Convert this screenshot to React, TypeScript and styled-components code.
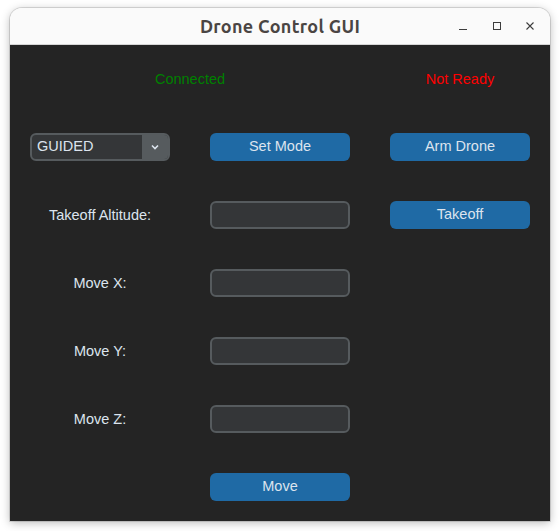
import React, { useState } from 'react';
import styled, { createGlobalStyle } from 'styled-components';

const GlobalStyle = createGlobalStyle`
  html, body {
    margin: 0;
    padding: 0;
    background: #ffffff;
  }
  * {
    box-sizing: border-box;
  }
`;

const Desktop = styled.div`
  width: 560px;
  height: 531px;
  padding: 8px 10px 10px 10px;
  background: #ffffff;
`;

const Window = styled.div`
  width: 540px;
  height: 513px;
  display: flex;
  flex-direction: column;
  border-radius: 12px 12px 0 0;
  overflow: hidden;
  box-shadow: 0 2px 10px rgba(0, 0, 0, 0.28), 0 0 0 1px rgba(0, 0, 0, 0.12);
`;

const TitleBar = styled.div`
  height: 37px;
  flex-shrink: 0;
  display: flex;
  align-items: center;
  justify-content: center;
  position: relative;
  background: #fafafa;
  border-bottom: 1px solid #d6d6d6;
`;

const Title = styled.span`
  font-family: Ubuntu, 'Noto Sans', 'DejaVu Sans', sans-serif;
  font-weight: 700;
  font-size: 18px;
  color: #4a4543;
  letter-spacing: 0.3px;
`;

const WindowControls = styled.div`
  position: absolute;
  right: 12px;
  top: 0;
  height: 100%;
  display: flex;
  align-items: center;
  gap: 17px;
`;

const ControlIcon = styled.svg`
  width: 16px;
  height: 16px;
  display: block;
`;

const Body = styled.div`
  flex: 1;
  background: #242424;
  display: grid;
  grid-template-columns: repeat(3, 180px);
  grid-template-rows: repeat(7, 68px);
  align-items: center;
  justify-items: center;
  font-family: 'Liberation Sans', Arial, sans-serif;
  font-size: 14.5px;
`;

const Status = styled.span<{ $color: string; $span?: number }>`
  color: ${(p) => p.$color};
  grid-column: ${(p) => (p.$span ? `span ${p.$span}` : 'auto')};
`;

const Label = styled.span`
  color: #dce4ee;
`;

const Button = styled.button<{ $col?: number }>`
  width: 140px;
  height: 28px;
  border: none;
  border-radius: 6px;
  background: #1f6aa5;
  color: #dce4ee;
  font-family: 'Liberation Sans', Arial, sans-serif;
  font-size: 14.5px;
  padding: 0 0 2px 0;
  cursor: pointer;
  grid-column: ${(p) => p.$col ?? 'auto'};

  &:hover {
    background: #144870;
  }
`;

const Entry = styled.input`
  width: 140px;
  height: 28px;
  border: 2px solid #565b5e;
  border-radius: 6px;
  background: #343638;
  color: #dce4ee;
  font-family: 'Liberation Sans', Arial, sans-serif;
  font-size: 14.5px;
  padding: 0 8px;
  outline: none;
`;

const Combo = styled.div`
  width: 140px;
  height: 28px;
  display: flex;
  border: 2px solid #565b5e;
  border-radius: 6px;
  overflow: hidden;
  background: #343638;
`;

const ComboValue = styled.span`
  flex: 1;
  display: flex;
  align-items: center;
  padding: 0 0 2px 5px;
  color: #dce4ee;
`;

const ComboArrow = styled.div`
  width: 26px;
  background: #565b5e;
  display: flex;
  align-items: center;
  justify-content: center;
`;

const Spacer = styled.div``;

const App: React.FC = () => {
  const [altitude, setAltitude] = useState('');
  const [moveX, setMoveX] = useState('');
  const [moveY, setMoveY] = useState('');
  const [moveZ, setMoveZ] = useState('');

  return (
    <>
      <GlobalStyle />
      <Desktop>
        <Window>
          <TitleBar>
            <Title>Drone Control GUI</Title>
            <WindowControls>
              <ControlIcon viewBox="0 0 16 16">
                <line x1="3" y1="11.5" x2="11" y2="11.5" stroke="#3d3d3d" strokeWidth="1" />
              </ControlIcon>
              <ControlIcon viewBox="0 0 16 16">
                <rect x="4.5" y="4.5" width="7" height="7" fill="none" stroke="#3d3d3d" strokeWidth="1" />
              </ControlIcon>
              <ControlIcon viewBox="0 0 16 16">
                <path d="M4.5 4.5 L11.5 11.5 M11.5 4.5 L4.5 11.5" stroke="#3d3d3d" strokeWidth="1.1" />
              </ControlIcon>
            </WindowControls>
          </TitleBar>
          <Body>
            <Status $color="#008000" $span={2}>Connected</Status>
            <Status $color="#ff0000">Not Ready</Status>

            <Combo>
              <ComboValue>GUIDED</ComboValue>
              <ComboArrow>
                <svg width="8" height="6" viewBox="0 0 8 6">
                  <path d="M1 1.5 L4 4.5 L7 1.5" fill="none" stroke="#dce4ee" strokeWidth="1.6" />
                </svg>
              </ComboArrow>
            </Combo>
            <Button>Set Mode</Button>
            <Button>Arm Drone</Button>

            <Label>Takeoff Altitude:</Label>
            <Entry value={altitude} onChange={(e) => setAltitude(e.target.value)} />
            <Button>Takeoff</Button>

            <Label>Move X:</Label>
            <Entry value={moveX} onChange={(e) => setMoveX(e.target.value)} />
            <Spacer />

            <Label>Move Y:</Label>
            <Entry value={moveY} onChange={(e) => setMoveY(e.target.value)} />
            <Spacer />

            <Label>Move Z:</Label>
            <Entry value={moveZ} onChange={(e) => setMoveZ(e.target.value)} />
            <Spacer />

            <Button $col={2}>Move</Button>
          </Body>
        </Window>
      </Desktop>
    </>
  );
};

export default App;
